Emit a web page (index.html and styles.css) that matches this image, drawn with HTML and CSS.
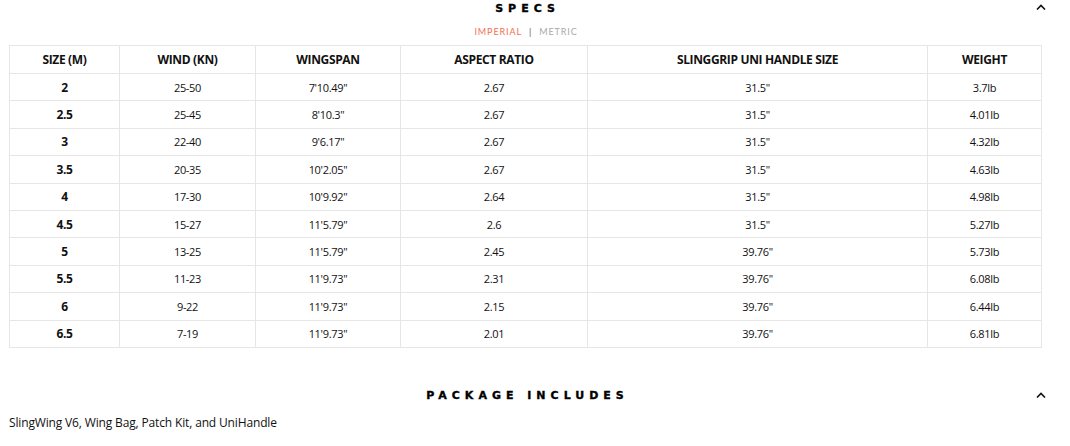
FILE: index.html
```html
<!DOCTYPE html>
<html>
<head>
<meta charset="utf-8">
<link rel="stylesheet" href="styles.css">
</head>
<body>
<div class="page">
  <section class="section">
    <div class="sec-head">
      <h2 class="sec-title">SPECS</h2>
      <svg class="chev" width="10" height="6" viewBox="0 0 10 6"><polyline points="1,5.5 5,1.5 9,5.5" fill="none" stroke="#111" stroke-width="1.6"/></svg>
    </div>
    <div class="units"><span class="on">IMPERIAL</span><span class="sep">|</span><span class="off">METRIC</span></div>
    <table class="specs">
      <colgroup>
        <col style="width:110px"><col style="width:136px"><col style="width:145px"><col style="width:187px"><col style="width:340px"><col style="width:114px">
      </colgroup>
      <thead>
        <tr><th>SIZE (M)</th><th>WIND (KN)</th><th>WINGSPAN</th><th>ASPECT RATIO</th><th>SLINGGRIP UNI HANDLE SIZE</th><th>WEIGHT</th></tr>
      </thead>
      <tbody>
        <tr><td class="b">2</td><td>25-50</td><td>7'10.49"</td><td>2.67</td><td>31.5"</td><td>3.7lb</td></tr>
        <tr><td class="b">2.5</td><td>25-45</td><td>8'10.3"</td><td>2.67</td><td>31.5"</td><td>4.01lb</td></tr>
        <tr><td class="b">3</td><td>22-40</td><td>9'6.17"</td><td>2.67</td><td>31.5"</td><td>4.32lb</td></tr>
        <tr><td class="b">3.5</td><td>20-35</td><td>10'2.05"</td><td>2.67</td><td>31.5"</td><td>4.63lb</td></tr>
        <tr><td class="b">4</td><td>17-30</td><td>10'9.92"</td><td>2.64</td><td>31.5"</td><td>4.98lb</td></tr>
        <tr><td class="b">4.5</td><td>15-27</td><td>11'5.79"</td><td>2.6</td><td>31.5"</td><td>5.27lb</td></tr>
        <tr><td class="b">5</td><td>13-25</td><td>11'5.79"</td><td>2.45</td><td>39.76"</td><td>5.73lb</td></tr>
        <tr><td class="b">5.5</td><td>11-23</td><td>11'9.73"</td><td>2.31</td><td>39.76"</td><td>6.08lb</td></tr>
        <tr><td class="b">6</td><td>9-22</td><td>11'9.73"</td><td>2.15</td><td>39.76"</td><td>6.44lb</td></tr>
        <tr><td class="b">6.5</td><td>7-19</td><td>11'9.73"</td><td>2.01</td><td>39.76"</td><td>6.81lb</td></tr>
      </tbody>
    </table>
  </section>
  <section class="section pkg">
    <div class="sec-head">
      <h2 class="sec-title">PACKAGE INCLUDES</h2>
      <svg class="chev" width="10" height="6" viewBox="0 0 10 6"><polyline points="1,5.5 5,1.5 9,5.5" fill="none" stroke="#111" stroke-width="1.6"/></svg>
    </div>
    <p class="pkg-text">SlingWing V6, Wing Bag, Patch Kit, and UniHandle</p>
  </section>
</div>
</body>
</html>
```
FILE: styles.css
```css
* { box-sizing: border-box; }
html, body { margin: 0; padding: 0; background: #fff; }
body { font-family: "Open Sans", "Liberation Sans", sans-serif; color: #111; }
.page { width: 1050px; padding-left: 9px; }
.section { width: 1032px; }
.sec-head { position: relative; height: 16px; display: flex; justify-content: center; align-items: flex-end; }
.sec-title {
  margin: 0;
  font-family: "DejaVu Sans", sans-serif;
  font-weight: 700;
  font-size: 11px;
  letter-spacing: 5px;
  line-height: 14px;
  padding-left: 5px;
  color: #000;
  -webkit-text-stroke: 0.35px #000;
}
.chev { position: absolute; right: -5px; top: 4px; }
.units {
  margin-top: 10px;
  height: 12px;
  display: flex; justify-content: center; align-items: center; gap: 7px;
  font-family: "Lato", sans-serif;
  font-size: 9px; letter-spacing: 0.9px; line-height: 12px;
  padding-left: 2px;
}
.units .on { color: #f0704f; }
.units .sep { color: #555; }
.units .off { color: #a8a8a8; }
.specs {
  margin-top: 7px;
  width: 1032px;
  border-collapse: collapse;
  table-layout: fixed;
  font-size: 11px;
}
.specs th, .specs td {
  border: 1px solid #e6e6e6;
  text-align: center;
  padding: 0;
}
.specs th { height: 28px; font-weight: 700; font-size: 12px; letter-spacing: -0.35px; }
.specs td { height: 27.4px; font-weight: 400; letter-spacing: -0.3px; }
.specs td.b { font-weight: 700; font-size: 12px; }
.pkg { margin-top: 39px; }
.pkg .chev { top: 5px; }
.pkg-text { margin: 12px 0 0; font-size: 12px; letter-spacing: -0.15px; line-height: 16px; }
```
